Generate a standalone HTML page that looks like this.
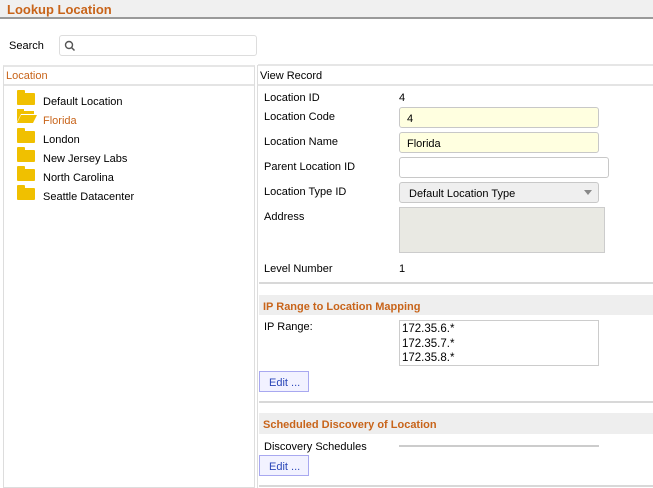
<!DOCTYPE html>
<html><head><meta charset="utf-8"><style>
*{margin:0;padding:0;box-sizing:border-box}
body{width:653px;height:488px;overflow:hidden;background:#fff;font-family:"Liberation Sans",sans-serif;font-size:11px;color:#000;position:relative}
.a{position:absolute;white-space:nowrap}
.in{position:absolute;border:1px solid #c8c8c8;border-radius:3px;padding:5px 0 0 7px}
.hdr{position:absolute;left:0;top:0;width:653px;height:19px;background:#f0f0f0;border-bottom:2px solid #9a9a9a}
.sec{position:absolute;left:259px;width:394px;background:#eeeeee;color:#c8641a;font-weight:bold;font-size:11px;padding:6px 0 0 4px}
.sep{position:absolute;left:259px;width:394px;height:2px;background:#d8d8d8}
.btn{position:absolute;left:259px;width:50px;height:21px;border:1px solid #a8a8f0;background:#f2f2ff;color:#2a46b8;padding:5px 0 0 9px}
.fold{position:absolute;left:17px;width:18px;height:12px;background:#f0c000;border-radius:1px}
.fold:before{content:"";position:absolute;left:0;top:-3px;width:8px;height:4px;background:#f0c000;border-radius:1px 1px 0 0}
</style></head><body>
<div class="hdr"></div>
<div class="a" style="left:7px;top:2px;color:#c8641a;font-weight:bold;font-size:13px">Lookup Location</div>
<div class="a" style="left:9px;top:40px">Search</div>
<div class="in" style="left:59px;top:35px;width:198px;height:21px;border-color:#ddd"></div>
<svg class="a" style="left:64px;top:40px" width="12" height="12"><circle cx="5" cy="5" r="3.5" fill="none" stroke="#555" stroke-width="1.4"/><line x1="7.5" y1="7.5" x2="10.5" y2="10.5" stroke="#555" stroke-width="1.5"/></svg>
<div class="a" style="left:3px;top:65px;width:252px;height:423px;border:1px solid #ddd;border-top:2px solid #e6e6e6"></div>
<div class="a" style="left:4px;top:84px;width:250px;height:2px;background:#e4e4e4"></div>
<div class="a" style="left:6px;top:70px;color:#c8641a">Location</div>
<div class="fold" style="top:93px"></div><div class="a" style="left:43px;top:96px">Default Location</div>
<svg class="a" style="left:17px;top:108px" width="20" height="16"><path d="M0 1h7v2h10v3H4L0 14z" fill="#f0c000"/><path d="M4 7h16l-4 8H0z" fill="#f0c000"/></svg>
<div class="a" style="left:43px;top:115px;color:#c8641a">Florida</div>
<div class="fold" style="top:131px"></div><div class="a" style="left:43px;top:134px">London</div>
<div class="fold" style="top:150px"></div><div class="a" style="left:43px;top:153px">New Jersey Labs</div>
<div class="fold" style="top:169px"></div><div class="a" style="left:43px;top:172px">North Carolina</div>
<div class="fold" style="top:188px"></div><div class="a" style="left:43px;top:191px">Seattle Datacenter</div>
<div class="a" style="left:257px;top:65px;width:1px;height:423px;background:#ddd"></div>
<div class="a" style="left:258px;top:64px;width:395px;height:2px;background:#e6e6e6"></div>
<div class="a" style="left:258px;top:84px;width:395px;height:2px;background:#e4e4e4"></div>
<div class="a" style="left:260px;top:70px">View Record</div>
<div class="a" style="left:264px;top:92px">Location ID</div><div class="a" style="left:399px;top:92px">4</div>
<div class="a" style="left:264px;top:111px">Location Code</div>
<div class="in" style="left:399px;top:107px;width:200px;height:21px;background:#ffffe0">4</div>
<div class="a" style="left:264px;top:136px">Location Name</div>
<div class="in" style="left:399px;top:132px;width:200px;height:21px;background:#ffffe0">Florida</div>
<div class="a" style="left:264px;top:161px">Parent Location ID</div>
<div class="in" style="left:399px;top:157px;width:210px;height:21px"></div>
<div class="a" style="left:264px;top:186px">Location Type ID</div>
<div class="in" style="left:399px;top:182px;width:200px;height:21px;background:#efefef;padding-left:9px">Default Location Type</div>
<div class="a" style="left:584px;top:190px;width:0;height:0;border-left:4px solid transparent;border-right:4px solid transparent;border-top:5px solid #888"></div>
<div class="a" style="left:264px;top:211px">Address</div>
<div class="a" style="left:399px;top:207px;width:206px;height:46px;background:#e9e9e3;border:1px solid #ccc"></div>
<div class="a" style="left:264px;top:263px">Level Number</div><div class="a" style="left:399px;top:263px">1</div>
<div class="sep" style="top:282px"></div>
<div class="sec" style="top:295px;height:20px">IP Range to Location Mapping</div>
<div class="a" style="left:264px;top:321px">IP Range:</div>
<div class="a" style="left:399px;top:320px;width:200px;height:46px;border:1px solid #ccc;padding:1px 0 0 2px;line-height:14.5px;font-size:11.5px">172.35.6.*<br>172.35.7.*<br>172.35.8.*</div>
<div class="btn" style="top:371px">Edit ...</div>
<div class="sep" style="top:401px"></div>
<div class="sec" style="top:413px;height:21px">Scheduled Discovery of Location</div>
<div class="a" style="left:264px;top:441px">Discovery Schedules</div>
<div class="a" style="left:399px;top:445px;width:200px;height:2px;background:#ccc"></div>
<div class="btn" style="top:455px">Edit ...</div>
<div class="sep" style="top:485px"></div>
</body></html>
